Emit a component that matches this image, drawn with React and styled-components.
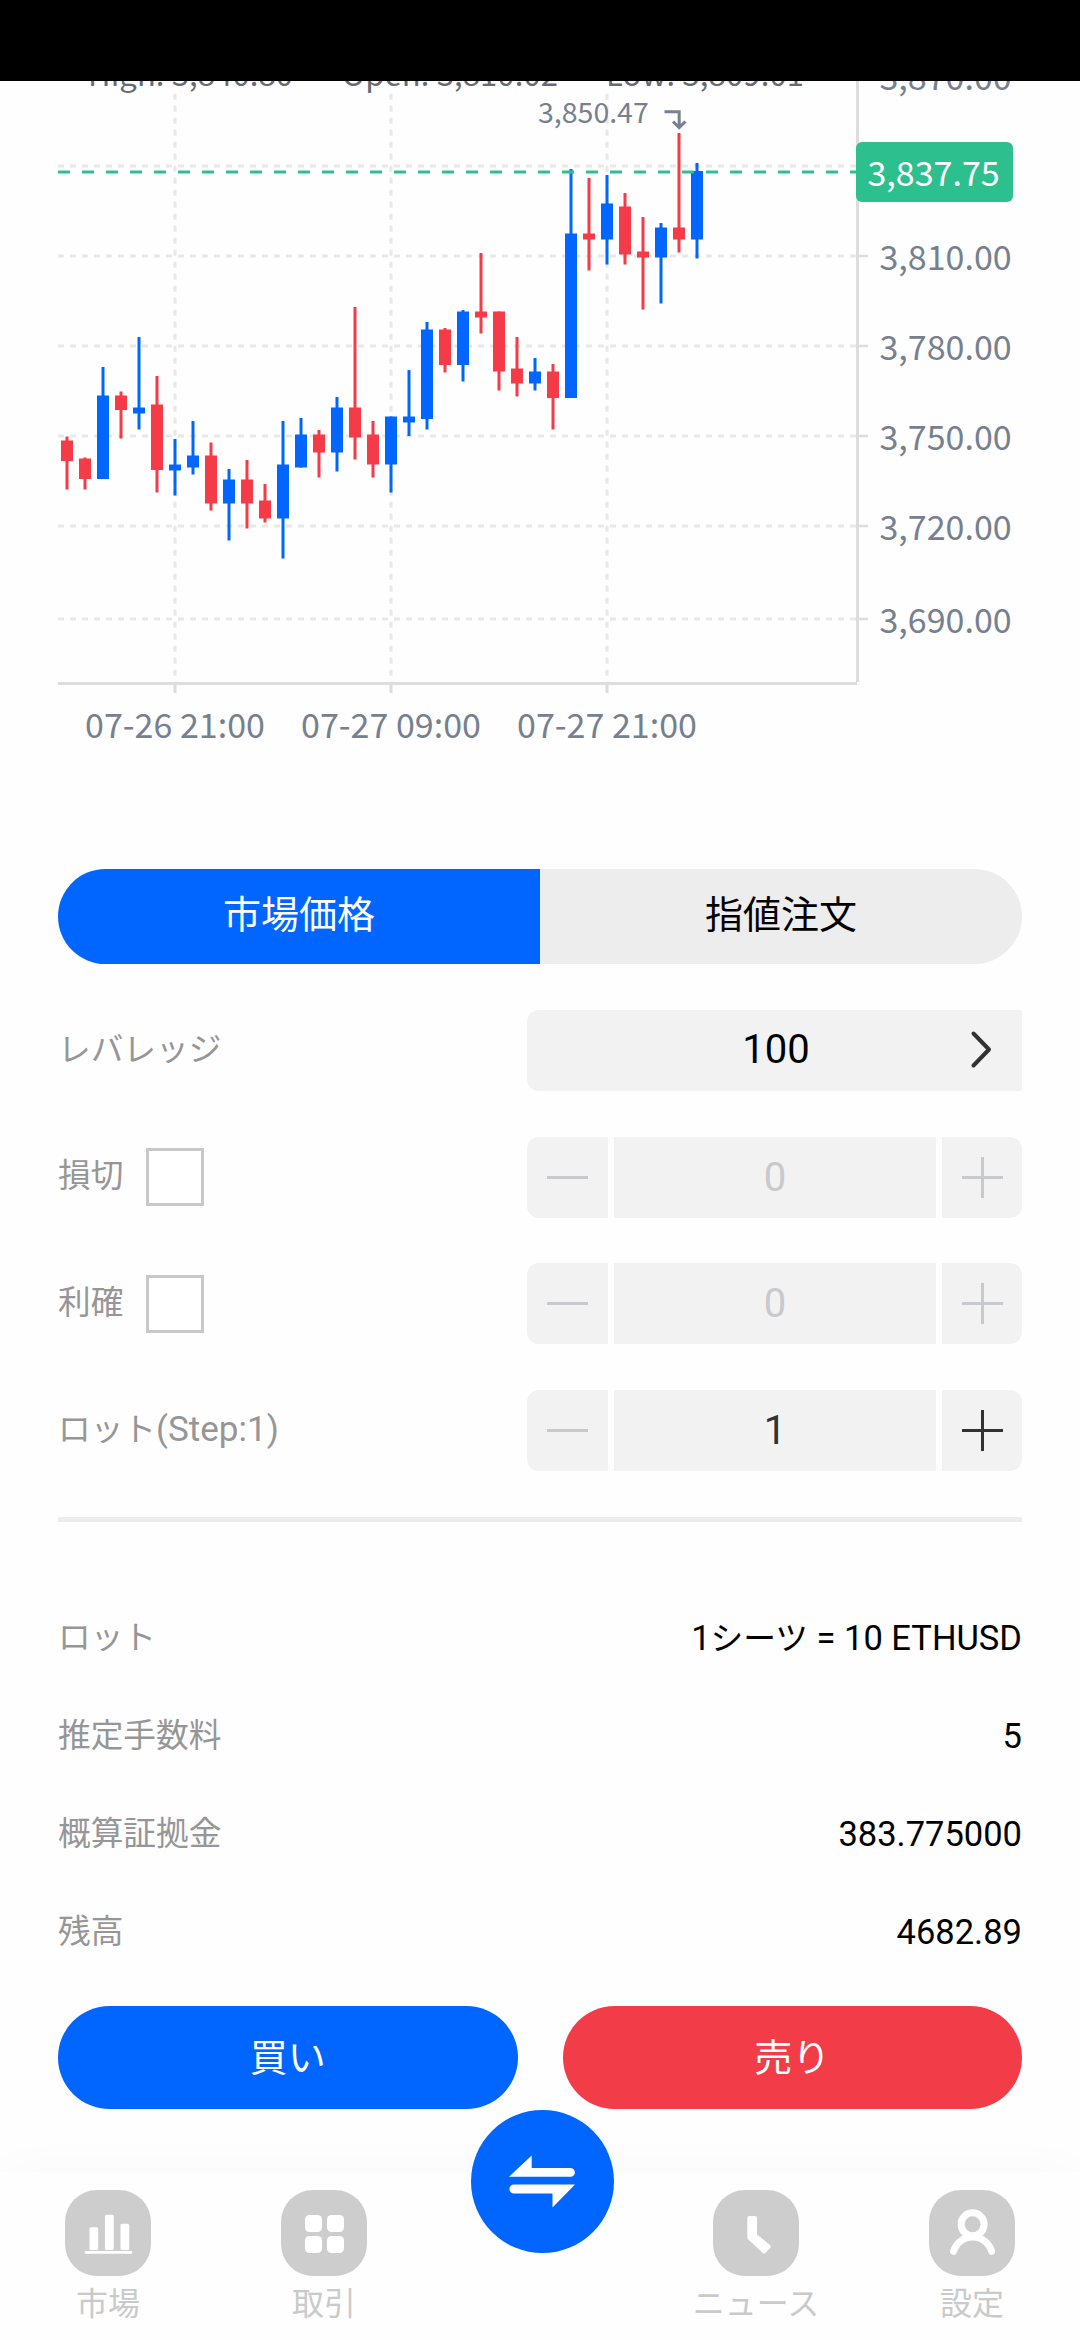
import styled, { createGlobalStyle } from 'styled-components';

const GlobalStyle = createGlobalStyle`
  * {
    box-sizing: border-box;
  }

  body {
    margin: 0;
    background: #fefefe;
    font-family: Roboto, 'Noto Sans CJK JP', sans-serif;
  }
`;

const Page = styled.div`
  display: flex;
  flex-direction: column;
  width: 1080px;
  height: 2340px;
  overflow: hidden;
  background: #fefefe;
`;

const StatusBar = styled.div`
  flex: none;
  height: 81px;
  background: #000;
`;

const ChartSvg = styled.svg`
  flex: none;
  display: block;
  width: 1080px;
  height: 788px;
  font-family: 'Noto Sans CJK JP', sans-serif;
`;

const AxisText = styled.text`
  fill: #76808f;
  font-size: ${({ $size }) => $size || 34}px;
`;

const LegendText = styled.text`
  fill: #666b72;
  font-size: 31px;
`;

const PriceText = styled.text`
  fill: #fff;
  font-size: 34px;
`;

const Form = styled.main`
  flex: none;
  height: 1303px;
  padding: 0 58px;
`;

const OrderTypes = styled.div`
  display: flex;
  height: 95px;
  border-radius: 48px;
  overflow: hidden;
`;

const OrderType = styled.button`
  flex: 1;
  padding: 0 0 3px;
  border: 0;
  background: ${({ $active }) => ($active ? '#0066ff' : '#ededed')};
  color: ${({ $active }) => ($active ? '#fff' : '#000')};
  font-family: inherit;
  font-size: 38px;
  line-height: 92px;
`;

const Fields = styled.div`
  display: flex;
  flex-direction: column;
  gap: 45.7px;
  margin-top: 46px;
`;

const Field = styled.div`
  display: flex;
  align-items: center;
  justify-content: space-between;
  height: 81px;
`;

const FieldLabel = styled.div`
  display: flex;
  align-items: center;
  gap: 23px;
  color: #969696;
  font-size: 32.7px;
  line-height: 48px;
`;

const LabelText = styled.span`
  padding-bottom: 2px;
`;

const Latin = styled.span`
  font-size: 35px;
`;

const Kana = styled.span`
  font-size: 32.7px;
`;

const Checkbox = styled.span`
  width: 58px;
  height: 58px;
  border: 3px solid #c8c8c8;
  background: #fff;
`;

const Select = styled.button`
  display: flex;
  align-items: center;
  width: 495px;
  height: 81px;
  padding: 0 28px 2px 83px;
  border: 0;
  border-radius: 12px 2px 2px 12px;
  background: #f2f2f2;
  color: #000;
  font-family: inherit;
  font-size: 40px;
`;

const SelectValue = styled.span`
  flex: 1;
  padding-right: 28px;
  text-align: center;
`;

const Stepper = styled.div`
  display: grid;
  grid-template-columns: 81px 322px 80px;
  gap: 6px;
  width: 495px;
  height: 81px;
`;

const StepButton = styled.button`
  display: flex;
  align-items: center;
  justify-content: center;
  padding: 0;
  border: 0;
  border-radius: ${({ $side }) => ($side === 'left' ? '12px 0 0 12px' : '0 12px 12px 0')};
  background: #f2f2f2;
  color: ${({ $disabled }) => ($disabled ? '#c8c9cc' : '#323233')};
`;

const StepValue = styled.div`
  background: #f2f2f2;
  color: ${({ $disabled }) => ($disabled ? '#c8c9cc' : '#323233')};
  font-size: 40px;
  line-height: 81px;
  text-align: center;
`;

const Divider = styled.hr`
  height: 5px;
  margin: 46px 0 0;
  border: 0;
  background: #ececec;
`;

const Summary = styled.dl`
  margin: 67px 0 0;
`;

const SummaryRow = styled.div`
  display: flex;
  align-items: center;
  justify-content: space-between;
  height: 98px;
`;

const SummaryLabel = styled.dt`
  color: #969696;
  font-size: 32.7px;
  line-height: 48px;
`;

const SummaryValue = styled.dd`
  margin: 0;
  color: #000;
  font-size: 34.5px;
  line-height: 48px;
`;

const Actions = styled.div`
  display: flex;
  gap: 45px;
  margin-top: 25px;
`;

const ActionButton = styled.button`
  flex: 1;
  height: 103px;
  padding: 0 0 7px;
  border: 0;
  border-radius: 52px;
  background: ${({ $color }) => $color};
  color: #fff;
  font-family: inherit;
  font-size: 38px;
`;

const TabBar = styled.nav`
  position: relative;
  flex: none;
  display: grid;
  grid-template-columns: repeat(5, 1fr);
  height: 168px;
  background: #fefefe;
  box-shadow: 0 -4px 44px rgba(0, 0, 0, 0.025);
`;

const Tab = styled.div`
  display: flex;
  flex-direction: column;
  align-items: center;
  padding-top: 18px;
  color: #cacaca;
  font-size: 32px;
  line-height: 48px;
`;

const TabIcon = styled.svg`
  width: 86px;
  height: 86px;
  border-radius: 32px;
  background: #cdcdcd;
  margin-bottom: 4px;
`;

// Floats over the bar and the action buttons above it
const TradeButton = styled.button`
  position: absolute;
  top: -62px;
  left: 471px;
  width: 143px;
  height: 143px;
  padding: 0;
  border: 0;
  border-radius: 50%;
  background: #0066ff;
`;

const BLUE = '#0066ff';
const RED = '#f43b47';

// [rising, high, low, bodyTop, bodyBottom]
const candles = [
  [0, 436.5, 489.5, 440.5, 461],
  [0, 457.5, 489.5, 458.5, 479],
  [1, 367, 479, 395.5, 479],
  [0, 391.5, 438.5, 395.5, 410],
  [1, 337, 429.5, 407.5, 413.5],
  [0, 376, 492.5, 404.5, 470],
  [1, 439, 495.5, 464.5, 470.5],
  [1, 421, 474.5, 455.5, 467.5],
  [0, 442.5, 510.5, 455.5, 503.5],
  [1, 469, 540.5, 479.5, 503.5],
  [0, 460, 528.5, 479.5, 503.5],
  [0, 484, 522.5, 500.5, 518.5],
  [1, 421, 558.5, 464.5, 518.5],
  [1, 418, 467.5, 434.5, 467.5],
  [0, 430, 477.5, 434.5, 452.5],
  [1, 397, 471.5, 407.5, 452.5],
  [0, 307, 459.5, 407.5, 437.5],
  [0, 421, 477.5, 434.5, 464.5],
  [1, 416.5, 492.5, 416.5, 464.5],
  [1, 370, 436, 416.5, 422.5],
  [1, 322, 429.5, 329.5, 419],
  [0, 328, 372.5, 329.5, 365],
  [1, 310, 381.5, 311.5, 365],
  [0, 253, 333.5, 311.5, 317.5],
  [0, 311.5, 390.5, 311.5, 371.5],
  [0, 337, 396.5, 368.5, 383.5],
  [1, 358, 390.5, 371.5, 383.5],
  [0, 364, 429.5, 371.5, 398],
  [1, 169, 398, 233.5, 398],
  [0, 178, 270.5, 233.5, 239.5],
  [1, 175, 264.5, 203.5, 239.5],
  [0, 193, 264.5, 206.5, 254.5],
  [0, 217, 309.5, 251.5, 257.5],
  [1, 223, 303.5, 227.5, 257.5],
  [0, 133, 252.5, 227.5, 239.5],
  [1, 163, 258.5, 171, 239.5],
];

const priceTicks = [
  { y: 76, label: '3,870.00' },
  { y: 166 },
  { y: 256, label: '3,810.00' },
  { y: 346, label: '3,780.00' },
  { y: 436, label: '3,750.00' },
  { y: 526, label: '3,720.00' },
  { y: 619, label: '3,690.00' },
];

const timeTicks = [
  { x: 175, label: '07-26 21:00' },
  { x: 391, label: '07-27 09:00' },
  { x: 607, label: '07-27 21:00' },
];

const summary = [
  ['ロット', <>1<Kana>シーツ</Kana> = 10 ETHUSD</>],
  ['推定手数料', '5'],
  ['概算証拠金', '383.775000'],
  ['残高', '4682.89'],
];

const Candle = ({ index, data: [rising, high, low, top, bottom] }) => {
  const x = 67 + index * 18;
  return (
    <g fill={rising ? BLUE : RED}>
      <rect x={x - 1.5} y={high} width="3" height={low - high} />
      <rect x={x - 6} y={top} width="12" height={bottom - top} />
    </g>
  );
};

const Chart = () => (
  <ChartSvg viewBox="0 81 1080 788">
    <g stroke="#e8e8e8" strokeWidth="3" strokeDasharray="6 6">
      {priceTicks.map(({ y }) => (
        <line key={y} x1="58" x2="856" y1={y} y2={y} />
      ))}
      {timeTicks.map(({ x }) => (
        <line key={x} x1={x} x2={x} y1="93.7" y2="682" />
      ))}
    </g>
    <g stroke="#dddddd" strokeWidth="3">
      <line x1="58" x2="857" y1="683.5" y2="683.5" />
      <line x1="857.5" x2="857.5" y1="81" y2="682" />
      {priceTicks.map(({ y }) => (
        <line key={y} x1="858" x2="868" y1={y} y2={y} strokeWidth="2.5" />
      ))}
      {timeTicks.map(({ x }) => (
        <line key={x} x1={x} x2={x} y1="685" y2="693" />
      ))}
    </g>
    <LegendText x="88" y="86" textLength="205">High: 3,840.80</LegendText>
    <LegendText x="342" y="86" textLength="216">Open: 3,810.02</LegendText>
    <LegendText x="606" y="86" textLength="198">Low: 3,809.01</LegendText>
    {candles.map((candle, index) => (
      <Candle key={index} index={index} data={candle} />
    ))}
    <line x1="58" x2="857" y1="172" y2="172" stroke="#2dc08e" strokeWidth="3" strokeDasharray="12 12" />
    <AxisText $size={28.5} x="538" y="122.5">3,850.47</AxisText>
    <path d="M664.5 111.8H679.2V127M673 121.5L679.2 127.6L685.4 121.5" fill="none" stroke="#76808f" strokeWidth="3" />
    {priceTicks.map(({ y, label }) => label && (
      <AxisText key={y} x="879.5" y={y + 13.5}>{label}</AxisText>
    ))}
    {timeTicks.map(({ x, label }) => (
      <AxisText key={x} x={x} y="737.5" textAnchor="middle">{label}</AxisText>
    ))}
    <rect x="856" y="142" width="157" height="60" rx="6" fill="#2dc08e" />
    <PriceText x="867.5" y="185.7">3,837.75</PriceText>
  </ChartSvg>
);

const MinusIcon = () => (
  <svg width="41" height="41" viewBox="0 0 41 41" stroke="currentColor" strokeWidth="3">
    <path d="M0 20.5H41" />
  </svg>
);

const PlusIcon = () => (
  <svg width="41" height="41" viewBox="0 0 41 41" stroke="currentColor" strokeWidth="3">
    <path d="M0 20.5H41M20.5 0V41" />
  </svg>
);

const StepperField = ({ label, value, checkable, canDecrease, canIncrease }) => (
  <Field>
    <FieldLabel>
      <LabelText>{label}</LabelText>
      {checkable && <Checkbox />}
    </FieldLabel>
    <Stepper>
      <StepButton $side="left" $disabled={!canDecrease}><MinusIcon /></StepButton>
      <StepValue $disabled={checkable}>{value}</StepValue>
      <StepButton $side="right" $disabled={!canIncrease}><PlusIcon /></StepButton>
    </Stepper>
  </Field>
);

const MarketIcon = () => (
  <TabIcon viewBox="0 0 86 86" fill="#fff">
    <rect x="24.5" y="37.3" width="8.7" height="22.7" rx="1.5" />
    <rect x="40" y="24.7" width="8.7" height="35.3" rx="1.5" />
    <rect x="55.5" y="33.7" width="8.7" height="26.3" rx="1.5" />
    <rect x="19.7" y="61" width="47.6" height="2.8" rx="1.4" />
  </TabIcon>
);

const TradeIcon = () => (
  <TabIcon viewBox="0 0 86 86" fill="#fff">
    <rect x="24" y="25" width="17" height="17" rx="4.5" />
    <rect x="46" y="25" width="17" height="17" rx="4.5" />
    <rect x="24" y="46" width="17" height="17" rx="4.5" />
    <rect x="46" y="46" width="17" height="17" rx="4.5" />
  </TabIcon>
);

const NewsIcon = () => (
  <TabIcon viewBox="0 0 86 86" fill="#fff" stroke="#fff" strokeWidth="4" strokeLinejoin="round">
    <path d="M36.3 28H42V45.3L55.6 56.6L51.2 61.4L36.3 47.8Z" />
  </TabIcon>
);

const SettingsIcon = () => (
  <TabIcon viewBox="0 0 86 86" fill="none" stroke="#fff" strokeWidth="7" strokeLinecap="round">
    <circle cx="43.6" cy="34.3" r="11.5" />
    <path d="M24.6 61.3A19.8 19.8 0 0 1 62.6 61.3" />
  </TabIcon>
);

const App = () => (
  <>
    <GlobalStyle />
    <Page>
      <StatusBar />
      <Chart />
      <Form>
        <OrderTypes>
          <OrderType $active>市場価格</OrderType>
          <OrderType>指値注文</OrderType>
        </OrderTypes>
        <Fields>
          <Field>
            <FieldLabel><LabelText>レバレッジ</LabelText></FieldLabel>
            <Select>
              <SelectValue>100</SelectValue>
              <svg width="24" height="40" viewBox="0 0 24 40" fill="none" stroke="#323233" strokeWidth="4" strokeLinecap="round" strokeLinejoin="round">
                <path d="M3.5 3.5L19 19.5L3.5 35.5" />
              </svg>
            </Select>
          </Field>
          <StepperField label="損切" value="0" checkable />
          <StepperField label="利確" value="0" checkable />
          <StepperField label={<>ロット<Latin>(Step:1)</Latin></>} value="1" canIncrease />
        </Fields>
        <Divider />
        <Summary>
          {summary.map(([label, value]) => (
            <SummaryRow key={label}>
              <SummaryLabel>{label}</SummaryLabel>
              <SummaryValue>{value}</SummaryValue>
            </SummaryRow>
          ))}
        </Summary>
        <Actions>
          <ActionButton $color={BLUE}>買い</ActionButton>
          <ActionButton $color="#f23c48">売り</ActionButton>
        </Actions>
      </Form>
      <TabBar>
        <Tab><MarketIcon />市場</Tab>
        <Tab><TradeIcon />取引</Tab>
        <Tab />
        <Tab><NewsIcon />ニュース</Tab>
        <Tab><SettingsIcon />設定</Tab>
        <TradeButton>
          <svg width="143" height="143" viewBox="0 0 143 143" fill="#fff">
            <path d="M38 66.8L60.7 45.5V58H99.5A4.4 4.4 0 0 1 99.5 66.8Z" />
            <path d="M104 74.5L81.5 97.5V83.6H43A4.5 4.5 0 0 1 43 74.5Z" />
          </svg>
        </TradeButton>
      </TabBar>
    </Page>
  </>
);

export default App;
